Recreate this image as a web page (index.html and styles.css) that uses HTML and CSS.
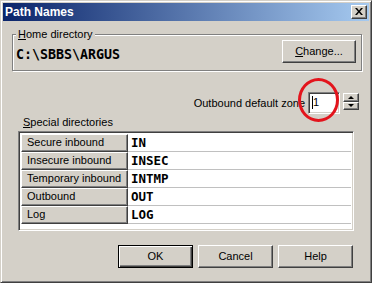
FILE: index.html
```html
<!DOCTYPE html>
<html>
<head>
<meta charset="utf-8">
<link rel="stylesheet" href="styles.css">
</head>
<body>
<div class="window">
  <div class="titlebar">
    <span class="title">Path Names</span>
    <span class="close">
      <svg width="8" height="7" viewBox="0 0 8 7"><path d="M0 0h2l2 2.5L6 0h2L5 3.5 8 7H6L4 4.5 2 7H0l3-3.5z" fill="#000"/></svg>
    </span>
  </div>
  <div class="content">
    <div class="group">
      <div class="legend"><u>H</u>ome directory</div>
      <div class="group-row">
        <span class="path">C:\SBBS\ARGUS</span>
        <span class="btn change"><u>C</u>hange...</span>
      </div>
    </div>
    <div class="zone-row">
      <span class="zone-label">Outbound default zone</span>
      <span class="input"><span class="caret"></span>1</span>
      <span class="spin">
        <span class="spin-btn"><span class="tri-up"></span></span>
        <span class="spin-btn"><span class="tri-down"></span></span>
      </span>
    </div>
    <div class="special-label"><u>S</u>pecial directories</div>
    <div class="table">
      <div class="row"><span class="head">Secure inbound</span><span class="val">IN</span></div>
      <div class="row"><span class="head">Insecure inbound</span><span class="val">INSEC</span></div>
      <div class="row"><span class="head">Temporary inbound</span><span class="val">INTMP</span></div>
      <div class="row"><span class="head">Outbound</span><span class="val">OUT</span></div>
      <div class="row"><span class="head">Log</span><span class="val">LOG</span></div>
    </div>
    <div class="buttons">
      <span class="btn default">OK</span>
      <span class="btn">Cancel</span>
      <span class="btn">Help</span>
    </div>
  </div>
  <div class="circle"></div>
</div>
</body>
</html>
```

FILE: styles.css
```css
html, body {
  margin: 0;
  padding: 0;
  background: #d4d0c8;
}
.window {
  position: relative;
  width: 372px;
  height: 283px;
  box-sizing: border-box;
  border: 1px solid;
  border-color: #d4d0c8 #404040 #404040 #d4d0c8;
  box-shadow: inset 1px 1px 0 #fff, inset -1px -1px 0 #808080;
  padding: 2px;
  background: #d4d0c8;
  font-family: "Liberation Sans", Arial, sans-serif;
  font-size: 11px;
  color: #000;
  overflow: hidden;
}
.titlebar {
  height: 18px;
  display: flex;
  align-items: center;
  justify-content: space-between;
  background: linear-gradient(to right, #0a246a, #a6caf0);
  padding: 0 2px 0 2px;
}
.title {
  color: #fff;
  font-weight: bold;
  font-size: 12px;
  line-height: 14px;
}
.close {
  width: 16px;
  height: 14px;
  box-sizing: border-box;
  background: #d4d0c8;
  border: 1px solid;
  border-color: #fff #404040 #404040 #fff;
  box-shadow: inset -1px -1px 0 #808080;
  display: flex;
  align-items: center;
  justify-content: center;
  padding: 0 1px 1px 0;
}
.close svg { display: block; }
.content {
  padding: 13px 7px 0 9px;
}
.group {
  border: 1px solid #808080;
  box-shadow: inset 1px 1px 0 #fff, 1px 1px 0 #fff;
  height: 37px;
  box-sizing: border-box;
}
.legend {
  margin: -7px 0 0 3px;
  padding: 0 2px;
  width: fit-content;
  background: #d4d0c8;
  line-height: 13px;
  position: relative;
}
.group-row {
  display: flex;
  justify-content: space-between;
  align-items: flex-start;
  margin-top: -1px;
  padding: 0 5px 0 3px;
}
.path {
  font-family: "DejaVu Sans Mono", monospace;
  font-weight: bold;
  font-size: 13.3px;
  line-height: 15px;
  margin-top: 7px;
}
.btn {
  display: flex;
  align-items: center;
  justify-content: center;
  box-sizing: border-box;
  height: 23px;
  width: 75px;
  background: #d4d0c8;
  border: 1px solid;
  border-color: #fff #404040 #404040 #fff;
  box-shadow: inset -1px -1px 0 #808080;
  line-height: 13px;
}
.change {
  width: 74px;
}
.btn.default {
  border: 1px solid #000;
  box-shadow: inset 1px 1px 0 #fff, inset -1px -1px 0 #404040, inset -2px -2px 0 #808080;
}
.zone-row {
  display: flex;
  justify-content: flex-end;
  align-items: center;
  margin-top: 21px;
  padding-right: 3px;
  height: 22px;
}
.zone-label {
  line-height: 13px;
}
.input {
  margin-left: 3px;
  width: 32px;
  height: 22px;
  box-sizing: border-box;
  background: #fff;
  border: 1px solid;
  border-color: #808080 #fff #fff #808080;
  box-shadow: inset 1px 1px 0 #404040, inset -1px -1px 0 #d4d0c8;
  padding: 3px 0 0 3px;
  line-height: 13px;
  display: flex;
  align-items: flex-start;
}
.caret {
  width: 1px;
  height: 13px;
  background: #000;
}
.spin {
  margin-left: 3px;
  width: 16px;
  height: 17px;
  display: flex;
  flex-direction: column;
  align-self: flex-start;
  margin-top: 1px;
}
.spin-btn {
  flex: 1;
  box-sizing: border-box;
  background: #d4d0c8;
  border: 1px solid;
  border-color: #fff #404040 #404040 #fff;
  box-shadow: inset -1px -1px 0 #808080;
  display: flex;
  align-items: center;
  justify-content: center;
}
.tri-up {
  width: 0;
  height: 0;
  border-left: 3px solid transparent;
  border-right: 3px solid transparent;
  border-bottom: 3px solid #000;
}
.tri-down {
  width: 0;
  height: 0;
  border-left: 3px solid transparent;
  border-right: 3px solid transparent;
  border-top: 3px solid #000;
}
.special-label {
  margin: 2px 0 0 11px;
  line-height: 13px;
}
.table {
  margin: 2px 8px 0 6px;
  height: 100px;
  box-sizing: border-box;
  background: #fff;
  border: 1px solid;
  border-color: #808080 #fff #fff #808080;
  box-shadow: inset 1px 1px 0 #404040, inset -1px -1px 0 #d4d0c8;
  padding: 2px 2px 0 2px;
}
.row {
  display: grid;
  grid-template-columns: 107px 1fr;
  height: 18px;
}
.head {
  box-sizing: border-box;
  background: #d4d0c8;
  border: 1px solid;
  border-color: #fff #404040 #404040 #fff;
  box-shadow: inset -1px -1px 0 #808080;
  padding: 0 0 0 5px;
  line-height: 15px;
}
.val {
  box-sizing: border-box;
  border-bottom: 1px solid #c0c0c0;
  padding: 1px 0 0 3px;
  font-family: "DejaVu Sans Mono", monospace;
  font-weight: bold;
  font-size: 12.5px;
  line-height: 15px;
}
.buttons {
  display: flex;
  justify-content: flex-end;
  gap: 5px;
  margin: 14px 9px 0 0;
}
.circle {
  position: absolute;
  left: 297px;
  top: 77px;
  width: 41px;
  height: 44px;
  box-sizing: border-box;
  border: 3px solid #e3141c;
  border-radius: 50%;
}
```
